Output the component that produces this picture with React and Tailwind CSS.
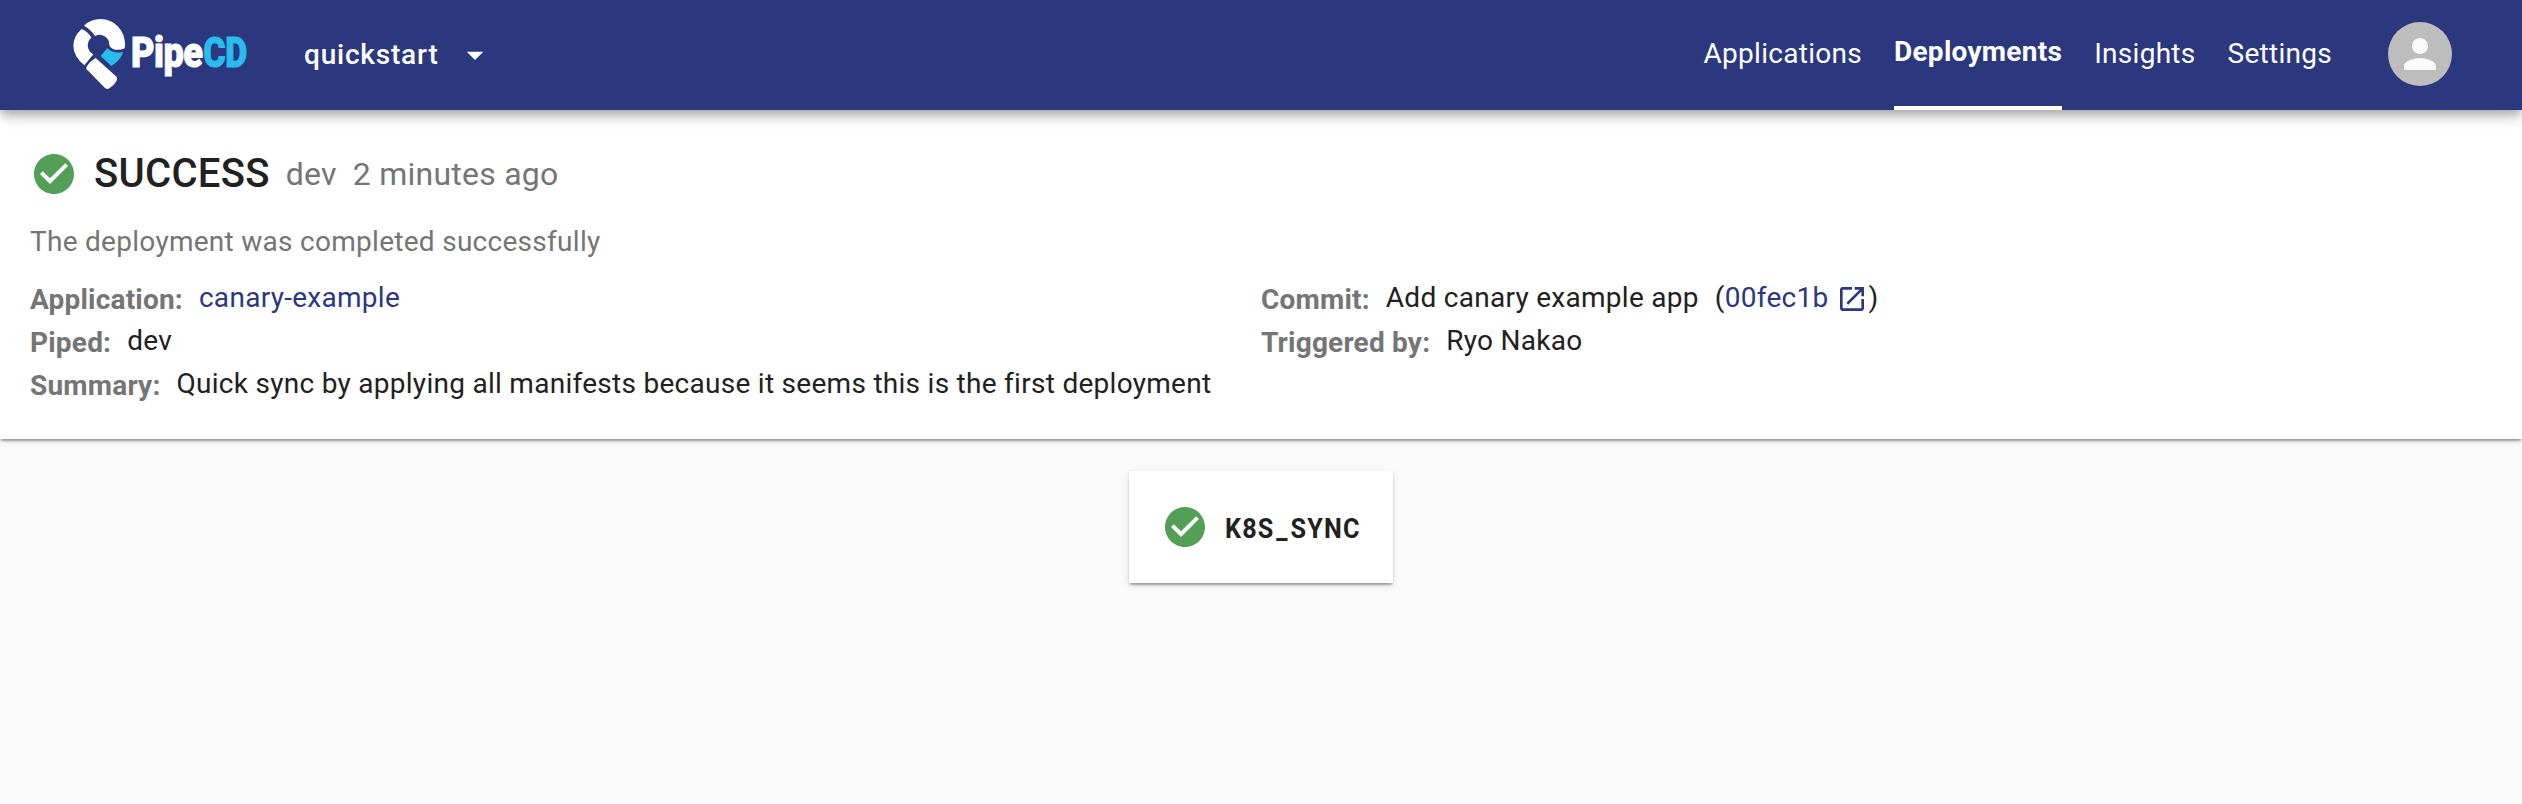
const CHECK = "M12 2C6.48 2 2 6.48 2 12s4.48 10 10 10 10-4.48 10-10S17.52 2 12 2zm-2 15l-5-5 1.41-1.41L10 14.17l7.59-7.59L19 8l-9 9z";

function Check({ className }) {
  return (
    <svg viewBox="0 0 24 24" className={className} fill="currentColor">
      <path d={CHECK} />
    </svg>
  );
}

function Logo() {
  return (
    <svg viewBox="0 0 660 330" className="h-[110px] w-[220px] shrink-0">
      <g fill="#fff">
        <path d="M102 77 Q122 57 152 57 C192 57 225 91 225 132 Q225 140 224 145 Q206 153 189 147 Q179 143 178 135 A29 30 0 0 0 135 108 Q122 88 102 77Z" />
        <path d="M95 87 Q114 95 124 113 A30 30 0 0 0 130 163 L103 196 Q70 168 70 137 Q71 108 95 87Z" />
        <path d="M137 174 L198 229 Q204 235 200 242 Q192 256 178 265 Q171 269 165 264 L110 208 Q107 204 111 198 Q121 183 137 174Z" />
      </g>
      <path fill="#29bdee" d="M172 145 Q188 162 220 156 Q212 180 184 198 L152 168Z" />
      <g fontFamily="Roboto" fontWeight="900" fontSize="129" strokeWidth="3" letterSpacing="-2">
        <text x="243" y="200" fill="#fff" stroke="#fff" textLength="214" lengthAdjust="spacingAndGlyphs">Pipe</text>
        <text x="460" y="200" fill="#29bdee" stroke="#29bdee" textLength="130" lengthAdjust="spacingAndGlyphs">CD</text>
      </g>
    </svg>
  );
}

function Row({ label, children }) {
  return (
    <div className="flex h-[43px] items-center">
      <span className="mr-4 pt-[3px] font-bold tracking-[0.2px] text-[#757575]">{label}</span>
      <span className="flex items-center pb-0.5">{children}</span>
    </div>
  );
}

export default function App() {
  return (
    <div className="flex h-[804px] w-full flex-col overflow-hidden bg-[#fafafa] font-['Roboto',sans-serif] text-[28px] leading-[42px] tracking-[0.28px] text-[#212121]">
      <header className="z-10 flex h-[110px] shrink-0 items-center bg-[#2c387e] pl-[50px] pr-[70px] text-white shadow-[0_4px_8px_-2px_rgba(0,0,0,0.2),0_8px_10px_0_rgba(0,0,0,0.14),0_2px_20px_0_rgba(0,0,0,0.12)]">
        <Logo />
        <button className="ml-[34px] flex items-center font-medium tracking-[0.8px]">
          quickstart
          <svg viewBox="0 0 24 24" className="ml-4 size-10" fill="currentColor"><path d="M7 10l5 5 5-5z" /></svg>
        </button>
        <nav className="ml-auto flex h-full items-center gap-8">
          <a className="pb-0.5">Applications</a>
          <a className="flex h-full items-center border-b-4 border-white pb-0.5 font-bold">Deployments</a>
          <a className="pb-0.5">Insights</a>
          <a className="pb-0.5">Settings</a>
        </nav>
        <div className="ml-[56px] mb-0.5 flex size-16 items-center justify-center rounded-full bg-[#bdbdbd] text-[#fafafa]">
          <svg viewBox="0 0 24 24" className="size-12" fill="currentColor"><path d="M12 12c2.21 0 4-1.79 4-4s-1.79-4-4-4-4 1.79-4 4 1.79 4 4 4zm0 2c-2.67 0-8 1.34-8 4v2h16v-2c0-2.66-5.33-4-8-4z" /></svg>
        </div>
      </header>
      <section className="flex h-[329px] shrink-0 flex-col bg-white px-[30px] pt-8 shadow-[0_4px_2px_-2px_rgba(0,0,0,0.2),0_2px_2px_0_rgba(0,0,0,0.14),0_2px_6px_0_rgba(0,0,0,0.12)]">
        <div className="flex h-16 items-center">
          <Check className="size-12 text-[#549f57]" />
          <h1 className="ml-4 text-[40px] font-medium tracking-[0.3px]">SUCCESS</h1>
          <span className="ml-4 text-[32px] tracking-[0.24px] text-[#757575]">dev</span>
          <span className="ml-4 text-[32px] tracking-[0.24px] text-[#757575]">2 minutes ago</span>
        </div>
        <p className="mt-[15px] text-[#757575]">The deployment was completed successfully</p>
        <div className="mt-[14px] grid grid-cols-2">
          <div>
            <Row label="Application:"><a className="text-[#2c387e]">canary-example</a></Row>
            <Row label="Piped:">dev</Row>
            <Row label="Summary:">Quick sync by applying all manifests because it seems this is the first deployment</Row>
          </div>
          <div>
            <Row label="Commit:">
              Add canary example app
              <span className="ml-4 flex items-center">(
                <a className="flex items-center text-[#2c387e]">00fec1b
                  <svg viewBox="0 0 24 24" className="ml-2 mt-0.5 size-8" fill="currentColor"><path d="M19 19H5V5h7V3H5c-1.11 0-2 .9-2 2v14c0 1.1.89 2 2 2h14c1.1 0 2-.9 2-2v-7h-2v7zM14 3v2h3.59l-9.83 9.83 1.41 1.41L19 6.41V10h2V3h-7z" /></svg>
                </a>)
              </span>
            </Row>
            <Row label="Triggered by:">Ryo Nakao</Row>
          </div>
        </div>
      </section>
      <main className="flex justify-center pt-8">
        <div className="flex h-28 w-[264px] items-center bg-white pl-8 shadow-[0_4px_2px_-2px_rgba(0,0,0,0.2),0_2px_2px_0_rgba(0,0,0,0.14),0_2px_6px_0_rgba(0,0,0,0.12)]">
          <Check className="size-12 text-[#549f57]" />
          <span className="ml-4 origin-left scale-x-90 pt-1 font-bold tracking-[1.3px]">K8S<span className="mx-[2px]">_</span>SYNC</span>
        </div>
      </main>
    </div>
  );
}
